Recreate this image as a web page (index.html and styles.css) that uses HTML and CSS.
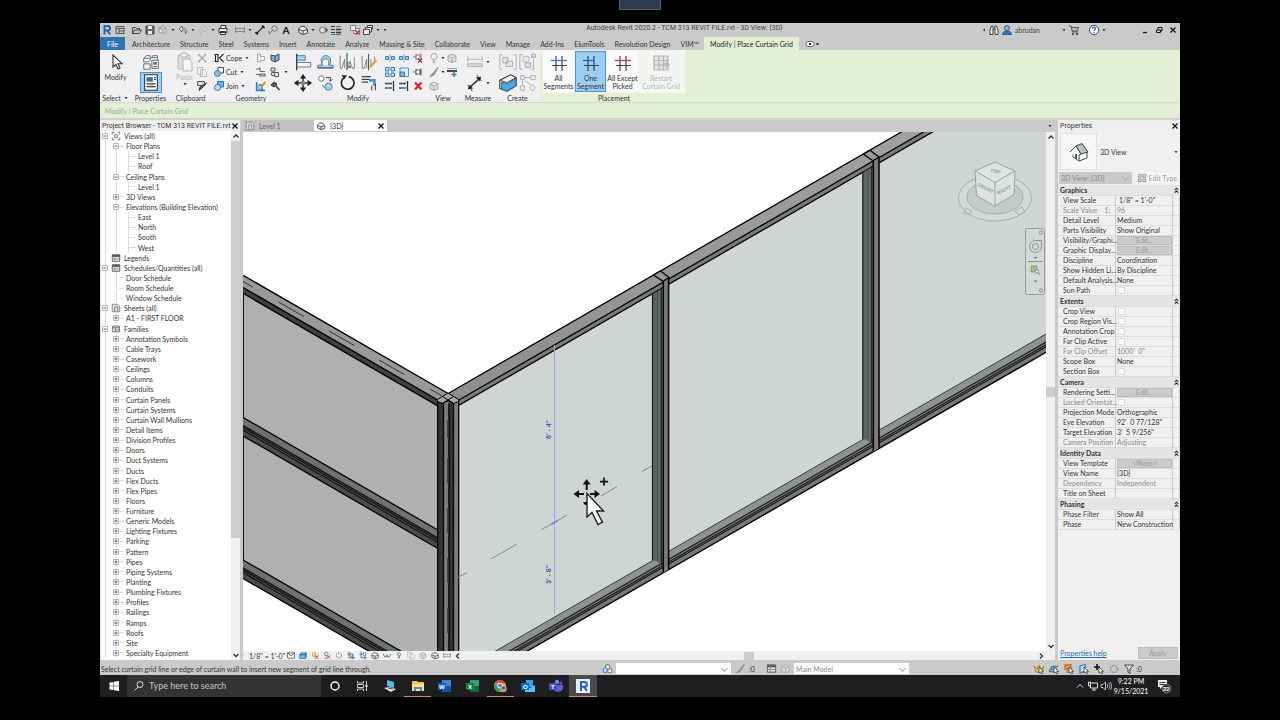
FILE: index.html
```html
<!DOCTYPE html>
<html lang="en">
<head>
<meta charset="utf-8">
<title>Autodesk Revit 2020.2</title>
<link rel="stylesheet" href="styles.css">
</head>
<body>
<svg class="defs" aria-hidden="true">
  <symbol id="plus" viewBox="0 0 6 6"><path d="M.5.5h5v5h-5z" fill="#fff" stroke="#b5b5b5"/><path d="M1.5 3h3M3 1.5v3" stroke="#555" stroke-width=".9"/></symbol>
  <symbol id="minus" viewBox="0 0 6 6"><path d="M.5.5h5v5h-5z" fill="#fff" stroke="#b5b5b5"/><path d="M1.5 3h3" stroke="#555" stroke-width=".9"/></symbol>
  <symbol id="caret" viewBox="0 0 6 6"><path d="M1.5 2h3L3 4.200z" fill="#333"/></symbol>
  <symbol id="x" viewBox="0 0 8 8"><path d="M1.500 1.500l5 5M6.500 1.500l-5 5" stroke="#111" stroke-width="1.300"/></symbol>
  <symbol id="revit" viewBox="0 0 12 12"><path d="M3.500 10.500V2h3.200a2.200 2.200 0 010 4.600H4M6.500 6.600l2.600 3.900" fill="none" stroke="#2866a8" stroke-width="2"/></symbol>
  <symbol id="win" viewBox="0 0 12 12"><path d="M2 2.500h8v7H2zM2 4.500h8M5 4.500v5M5 7h5" fill="none" stroke="#555"/></symbol>
  <symbol id="open" viewBox="0 0 12 12"><path d="M1.500 9.500v-6h3l1 1h3v1.500M1.500 9.500l2-3.500h7l-2 3.500z" fill="none" stroke="#444"/></symbol>
  <symbol id="save" viewBox="0 0 12 12"><path d="M2 2h7.500l.5.500V10H2z" fill="#666" stroke="#444"/><path d="M4 2h4v3H4zM4 7h4v3H4z" fill="#eee"/></symbol>
  <symbol id="cloud" viewBox="0 0 12 12"><path d="M2 4l4-2 3 2v4L6 9.500 2 8zM2 4l4 1.500L9 4M6 5.500v4" fill="#ddd" stroke="#999"/><circle cx="8.500" cy="8.500" r="1.800" fill="#bbb"/></symbol>
  <symbol id="undo" viewBox="0 0 12 12"><path d="M5 2L2 5l3 3V6c2-.5 3.500 0 3.500 3.500C11 7 9.500 4 5 4z" fill="#eee" stroke="#555" stroke-width=".9"/></symbol>
  <symbol id="redo" viewBox="0 0 12 12"><path d="M7 2l3 3-3 3V6C5 5.500 3.500 6 3.500 9.500 1 7 2.500 4 7 4z" fill="#ddd" stroke="#aaa" stroke-width=".9"/></symbol>
  <symbol id="print" viewBox="0 0 12 12"><path d="M3.500 4.500l.5-3h5l-.5 3M2 4.500h8v4H2zM3.500 7.500h5v3h-5z" fill="#f5f5f5" stroke="#333"/></symbol>
  <symbol id="meas" viewBox="0 0 12 12"><path d="M1.500 4.500h9M1.500 7.500h9M1.500 3v6M10.500 3v6" stroke="#888"/></symbol>
  <symbol id="dim" viewBox="0 0 12 12"><path d="M2 10l8-8" stroke="#333" stroke-width="1.200"/><path d="M1 8l3 3M8 1l3 3" stroke="#333"/><circle cx="3" cy="9" r="1.300"/><circle cx="9" cy="3" r="1.300"/></symbol>
  <symbol id="tag" viewBox="0 0 12 12"><circle cx="7.500" cy="4.500" r="2.700" fill="none" stroke="#777"/><path d="M5.500 6.500L2 10V7" fill="none" stroke="#777"/></symbol>
  <symbol id="home" viewBox="0 0 12 12"><path d="M1.500 5l3-3 4 1 2 3v3L6 10.500 2 8.500z" fill="#eee" stroke="#444"/><path d="M2 5.500l4 1.500 4.500-1.500M6 7v3.500" stroke="#444" fill="none"/></symbol>
  <symbol id="sec" viewBox="0 0 12 12"><circle cx="5.500" cy="6" r="3" fill="#ddd" stroke="#777"/><path d="M8.500 3L11 6 8.500 9z" fill="#555"/></symbol>
  <symbol id="lines" viewBox="0 0 12 12"><path d="M1 2.500h4M1 5.500h4M1 8.500h4" stroke="#333"/><path d="M6 2.500h5" stroke="#2f7fb8"/><path d="M6 5.500h5M6 8.500h5" stroke="#333" stroke-width="1.700"/><path d="M1 10.500h10" stroke="#2f7fb8"/></symbol>
  <symbol id="closeh" viewBox="0 0 12 12"><path d="M1.500 1.500h5v5h-5zM6.500 4.500h4v5h-6v-3" fill="#eee" stroke="#888"/><path d="M6.500 6.500l4 4m0-4l-4 4" stroke="#c8323a" stroke-width="1.500"/></symbol>
  <symbol id="switch" viewBox="0 0 12 12"><path d="M1.500 5.500h6v5h-6zM3.500 5V3.500h6V8H8M5.500 3V1.500h5V5.500" fill="#eee" stroke="#444"/></symbol>
  <symbol id="bino" viewBox="0 0 12 12"><path d="M2 10.500V6l1.500-4H5v8.500zM7 10.500V2h1.500L10 6v4.500zM5 5h2" fill="#eee" stroke="#444"/></symbol>
  <symbol id="user" viewBox="0 0 12 12"><circle cx="6" cy="4" r="2.500" fill="#8db4e0" stroke="#2e5d94"/><path d="M1.500 10.500c0-2.500 2-3.500 4.500-3.500s4.500 1 4.500 3.500z" fill="#3d76b8" stroke="#2e5d94"/></symbol>
  <symbol id="cart" viewBox="0 0 12 12"><path d="M1 2h2l1.500 6h5.500M3 3.500h7.500L9.500 7H4" fill="#bbb" stroke="#555"/><circle cx="5" cy="10" r="1"/><circle cx="9" cy="10" r="1"/></symbol>
  <symbol id="help" viewBox="0 0 12 12"><circle cx="6" cy="6" r="4.600" fill="#fff" stroke="#2d4d80"/><path d="M4.500 4.700c0-2 3-2 3 0 0 1.300-1.500 1-1.500 2.300" fill="none" stroke="#2d5fb0" stroke-width="1.200"/><path d="M5.400 8h1.200v1.200H5.400z" fill="#2d5fb0"/></symbol>
  <symbol id="arrow" viewBox="0 0 22 22"><path d="M8 4v12l3-2.500 2 4.500 2-1-2-4.300h4z" fill="#fff" stroke="#333" stroke-width="1.100"/></symbol>
  <symbol id="props1" viewBox="0 0 22 22"><path d="M3 7l3-3h4v5l-2 2H3zM11 7l2-3h5v5l-2 1M3 13h7v6H3zM3 7h6M12 6h5" fill="#f4f4f4" stroke="#666"/><path d="M12 9h7v9h-7z" fill="#fff" stroke="#555"/><path d="M13.500 11h4v3h-4z" fill="#3b7db5"/><path d="M13.500 16h4" stroke="#555"/></symbol>
  <symbol id="props2" viewBox="0 0 22 22"><path d="M4 2h14v17H4z" fill="#fff" stroke="#333" stroke-width="1.200"/><path d="M6 4.500h7v5H6z" fill="#3473aa"/><path d="M14.500 5h2M14.500 7h2M6 12h5M12.500 12H16M6 15h5M12.500 15H16" stroke="#333" stroke-width="1.200"/><path d="M12 10.500v6" stroke="#333"/></symbol>
  <symbol id="paste" viewBox="0 0 22 22"><path d="M4 4h12v14H4z" fill="#ddd" stroke="#b5b5b5"/><path d="M7 2h6v4H7z" fill="#eee" stroke="#b5b5b5"/><path d="M9 8h6l3 3v9H9z" fill="#f5f5f5" stroke="#b5b5b5"/></symbol>
  <symbol id="cutg" viewBox="0 0 12 12"><path d="M2 2l7 7M10 2L3 9" stroke="#aaa" stroke-width="1.300"/><path d="M2 9.500h2M8.500 9.500h2" stroke="#aaa" stroke-width="1.500"/></symbol>
  <symbol id="copyg" viewBox="0 0 12 12"><path d="M1.500 1.500h5v7h-5zM4.500 3.500h4l2 2v5h-6z" fill="#f4f4f4" stroke="#bbb"/></symbol>
  <symbol id="match" viewBox="0 0 12 12"><path d="M1.500 1.500h7v4h-7z" fill="#ddd" stroke="#555"/><path d="M10.500 3L6 8l-3 2.500L4 7z" fill="#667" stroke="#333"/></symbol>
  <symbol id="cope" viewBox="0 0 12 12"><path d="M2.500 2v8M5 2v8M1.500 2.500h4M1.500 9.500h4M10.500 2L6.500 6l4 4" stroke="#222" stroke-width="1.100" fill="none"/></symbol>
  <symbol id="cut" viewBox="0 0 12 12"><path d="M5 1.500h5.500V7H5z" fill="#fff" stroke="#444"/><circle cx="4.500" cy="7.500" r="3" fill="#8cc0e6" stroke="#2f78b0"/></symbol>
  <symbol id="join" viewBox="0 0 12 12"><path d="M4.500 1.500h6V7h-6z" fill="#6eb0e0" stroke="#2f78b0"/><circle cx="4.500" cy="7.500" r="3" fill="#bfe0f5" stroke="#2f78b0"/></symbol>
  <symbol id="g1" viewBox="0 0 12 12"><path d="M2.500 2h3v2.500h4v4h-4V10h-3z" fill="#eee" stroke="#aaa"/></symbol>
  <symbol id="g2" viewBox="0 0 12 12"><path d="M2 3l4 1v6L2 8zM6 4l4-2v6l-4 2" fill="#7db4dc" stroke="#444"/></symbol>
  <symbol id="g3" viewBox="0 0 12 12"><path d="M1 3h4M1 8.500h4M5 1.500V5M5 5.500h5M5 8h5v2H5z" fill="#ddd" stroke="#666" stroke-width="1.200"/></symbol>
  <symbol id="g4" viewBox="0 0 12 12"><path d="M2 2h4v3H2zM5.500 6.500h4v4h-4z" fill="#eee" stroke="#555"/><circle cx="4" cy="8" r="1.800" fill="#ddd" stroke="#555"/></symbol>
  <symbol id="wsets" viewBox="0 0 12 12"><path d="M4 5V3l2-1.500L8.500 3v3" fill="#e9f5df" stroke="#4f9d4f" stroke-width="1.200"/><path d="M1.500 6l2-1 2 1v4l-2 .5-2-.5z" fill="#bfe0f5" stroke="#2f78b0"/><path d="M6.500 6.500h4v4h-4z" fill="#f5f5f5" stroke="#777"/></symbol>
  <symbol id="g5" viewBox="0 0 12 12"><path d="M1.500 2v8.500H10M4 5h3v5" fill="#90c5e8" stroke="#2f78b0" stroke-width="1.300"/><path d="M10.500 2L6 7" stroke="#d79422" stroke-width="2"/></symbol>
  <symbol id="g6" viewBox="0 0 12 12"><path d="M2 5l3-3 3 2-3 3z" fill="#555" stroke="#333"/><path d="M6 5l4.500 5" stroke="#5b4636" stroke-width="1.800"/></symbol>
  <symbol id="align" viewBox="0 0 22 22"><path d="M4 2v18" stroke="#222" stroke-width="1.300"/><path d="M4.500 4h9v5h-9z" fill="#a7d2ef" stroke="#3a7cae"/><path d="M4.500 11.500h15v5h-15z" fill="#f5f5f5" stroke="#666"/></symbol>
  <symbol id="offset" viewBox="0 0 22 22"><path d="M3 14.500h5C5.500 9 7 4 12 4s6.500 5 4 10.500h4v3H3z" fill="#a7d2ef" stroke="#3a7cae"/><path d="M8 14.500c-1-4 1-7 4-7s4 3 2.500 7" fill="#f5f5f5" stroke="#666"/><path d="M3 17.500h17" stroke="#555" stroke-width="1.200"/></symbol>
  <symbol id="mirror" viewBox="0 0 22 22"><path d="M3.500 4v14h2l3-10v10M19 6v12h-2l-3-8v8" fill="#f5f5f5" stroke="#777"/><path d="M11 1v19" stroke="#3f9a48" stroke-width="1.600"/><path d="M12 11v6l2-1.500 1 2" fill="#fff" stroke="#444"/></symbol>
  <symbol id="mirror2" viewBox="0 0 22 22"><path d="M3.500 4v14h2l3-10v10M17 5v8M13 8v8" fill="#f5f5f5" stroke="#777"/><path d="M10.500 2v18" stroke="#555" stroke-width="1.200"/><path d="M19 9l-7 8" stroke="#e0a32a" stroke-width="2.500"/></symbol>
  <symbol id="move" viewBox="0 0 22 22"><path d="M11 4v14M4 11h14" stroke="#333" stroke-width="1.700"/><path d="M11 1l3.500 5h-7zM11 21l3.500-5h-7zM1 11l5-3.500v7zM21 11l-5-3.500v7z" fill="#222"/><path d="M9 9h4v4H9z" fill="#888"/></symbol>
  <symbol id="copy2" viewBox="0 0 22 22"><circle cx="7" cy="6" r="3" fill="#fff" stroke="#666"/><path d="M12 5h5v4M15 7l2 2 2-2" fill="none" stroke="#444"/><circle cx="15" cy="15" r="4" fill="#a7d2ef" stroke="#3a7cae"/><path d="M8 13l3 4" stroke="#666"/></symbol>
  <symbol id="rotate" viewBox="0 0 22 22"><path d="M8 5a7 7 0 105-1" fill="none" stroke="#222" stroke-width="1.800"/><path d="M5 2.500h6l-3 4.500z" fill="#222"/></symbol>
  <symbol id="trim" viewBox="0 0 22 22"><path d="M3 4h10M3 10h7M3 7h9" stroke="#444" stroke-width="1.200"/><path d="M11 8h6v6" fill="none" stroke="#4b96cc" stroke-width="3"/><path d="M14 14v5M18 12v7" stroke="#444" stroke-width="1.200"/></symbol>
  <symbol id="m1" viewBox="0 0 12 12"><path d="M1.500 4.500h3v3h-3zM7.500 4.500h3v3h-3z" fill="#a7d2ef" stroke="#3a7cae"/><path d="M6 2v8" stroke="#999"/></symbol>
  <symbol id="arr" viewBox="0 0 12 12"><path d="M1.500 1.500h3.500v3.500H1.500zM7 1.500h3.500v3.500H7zM1.500 7h3.500v3.500H1.500zM7 7h3.500v3.500H7z" fill="#c9e3f5" stroke="#3a7cae"/></symbol>
  <symbol id="scale" viewBox="0 0 12 12"><path d="M2 2h8.500v8.500H2z" fill="#e5f1fa" stroke="#4b96cc"/><path d="M2 6h4.500v4.500H2z" fill="#7db4dc" stroke="#3a7cae"/></symbol>
  <symbol id="ext" viewBox="0 0 12 12"><path d="M1 3.500h7M1 8h7" stroke="#444" stroke-width="1.300"/><path d="M9.500 1v10" stroke="#333" stroke-width="1.300"/><path d="M3 8h4" stroke="#4b96cc" stroke-width="2"/></symbol>
  <symbol id="pin" viewBox="0 0 12 12"><path d="M1 6h3M4 3v6M4 4h4v4H4M9 2.500v7" fill="#fff" stroke="#666" stroke-width="1.200"/></symbol>
  <symbol id="unpin" viewBox="0 0 12 12"><path d="M1 5h3M4 2v6M4 3h4v4H4M9 1.500v6" fill="#fff" stroke="#777"/><path d="M6 6.500l4 4m0-4l-4 4" stroke="#c8323a" stroke-width="1.500"/></symbol>
  <symbol id="del" viewBox="0 0 12 12"><path d="M3 2.500l6.500 7m0-7L3 9.500" stroke="#cf2a33" stroke-width="2.300"/></symbol>
  <symbol id="bulb" viewBox="0 0 12 12"><circle cx="6" cy="4.500" r="3" fill="#f2f2f2" stroke="#aaa"/><path d="M4.500 9h3M5 10.500h2" stroke="#999"/></symbol>
  <symbol id="gbox" viewBox="0 0 12 12"><path d="M2 4l4-2 4 2v5l-4 1.500L2 9zM2 4l4 2 4-2M6 6v4.500" fill="#ddd" stroke="#aaa"/></symbol>
  <symbol id="gbrush" viewBox="0 0 12 12"><path d="M10 1.500L5 7 2 10.500 6 9z" fill="#aaa" stroke="#888"/></symbol>
  <symbol id="lw" viewBox="0 0 12 12"><path d="M1 2.500h10" stroke="#999"/><path d="M1 5h10" stroke="#444" stroke-width="2"/><path d="M8 5v6M5.500 8.500h5" stroke="#3a7cae" stroke-width="1.500"/></symbol>
  <symbol id="ruler" viewBox="0 0 22 22"><path d="M3 8h16M3 5v6M19 5v6" stroke="#aaa"/><path d="M3 13h16v3H3z" fill="#ddd" stroke="#aaa"/></symbol>
  <symbol id="bigdim" viewBox="0 0 22 22"><path d="M5 16L16 6" stroke="#222" stroke-width="1.500"/><path d="M3 13l5 7M13 2l5 7" stroke="#333"/><path d="M3 18l2-5 4 4zM18 4l-2 5-4-4z" fill="#222"/></symbol>
  <symbol id="cr1" viewBox="0 0 22 22"><path d="M5 3H2v16h3M17 3h3v16h-3" fill="none" stroke="#aaa"/><path d="M5 6h6v6H5zM9 10h7v6H9z" fill="#e3e3e3" stroke="#aaa"/></symbol>
  <symbol id="cr2" viewBox="0 0 22 22"><path d="M5 3H2v16h3M17 8v11h-3" fill="none" stroke="#aaa"/><circle cx="9" cy="8" r="3.500" fill="#eee" stroke="#aaa"/><path d="M8 12h6v5H8z" fill="#ddd" stroke="#aaa"/><circle cx="17" cy="4" r="2" fill="none" stroke="#aaa" stroke-width="1.500"/></symbol>
  <symbol id="cr3" viewBox="0 0 22 22"><path d="M2 8L14 2l6 3v9L10 20l-8-3z" fill="#f5f5f5" stroke="#333" stroke-width="1.200"/><path d="M4 10l6 2 10-6v8l-10 6-6-2z" fill="#55a3dc" stroke="#1f5f92"/><path d="M2 8l8 2.500L20 5" fill="none" stroke="#333"/></symbol>
  <symbol id="cr4" viewBox="0 0 22 22"><path d="M3 3h4v4H3zM14 3h5v4h-5zM3 14h4v5H3zM16 12l3 4-3 4-3-4zM8 5h5M5 8v5M9 9l5 4" fill="none" stroke="#aaa"/></symbol>
  <symbol id="seg1" viewBox="0 0 22 22"><path d="M4 13.500h15M8 4v15M14 4v15" stroke="#444" stroke-width="1.200"/><path d="M3 8.500h16" stroke="#3d7ebd" stroke-width="1.300"/></symbol>
  <symbol id="seg2" viewBox="0 0 22 22"><path d="M4 13.500h15M8 4v15M14 4v15" stroke="#345" stroke-width="1.200"/><path d="M3 8.500h5" stroke="#345"/><path d="M8 8.500h6" stroke="#2668b0" stroke-width="1.300"/></symbol>
  <symbol id="seg3" viewBox="0 0 22 22"><path d="M4 13.500h15M8 4v15M14 4v15" stroke="#444" stroke-width="1.200"/><path d="M3 8.500h16" stroke="#b8414c" stroke-width="1.300"/></symbol>
  <symbol id="restart" viewBox="0 0 22 22"><path d="M4 4h14v14H4zM4 8.500h14M4 13h14M9 4v14M13.500 4v14" fill="#e3e3e3" stroke="#b5b5b5" stroke-width="1.200"/><path d="M12 14a4 4 0 014-3v-2l4 4-4 3v-2" fill="#bbb"/></symbol>
  <symbol id="frame" viewBox="0 0 12 12"><path d="M4 1.500H1.500V4M8 1.500h2.500V4M4 10.500H1.500V8M8 10.500h2.500V8" fill="none" stroke="#555"/><circle cx="6" cy="6" r="2.200" fill="#eee" stroke="#555"/></symbol>
  <symbol id="table" viewBox="0 0 12 12"><path d="M1.500 2h9v8h-9z" fill="#e5e5e5" stroke="#555"/><path d="M1.500 3.500h9" stroke="#555" stroke-width="2.500"/><path d="M4.500 3v7M1.500 7.200h9" stroke="#888"/></symbol>
  <symbol id="sheet" viewBox="0 0 12 12"><path d="M1.500 1.500h6l3 3v6h-9zM4.500 10V4.500h3.500V10" fill="#e5e5e5" stroke="#777"/></symbol>
  <symbol id="sun" viewBox="0 0 12 12"><circle cx="5" cy="5" r="2.700" fill="#ffe39a" stroke="#e09a26" stroke-width="1.300"/><path d="M6 6l4.500 4.500m0-4.500L6 10.500" stroke="#cf2a33" stroke-width="1.300"/></symbol>
  <symbol id="shad" viewBox="0 0 12 12"><circle cx="5" cy="4" r="2.500" fill="#cde3f3" stroke="#4b86b5"/><path d="M2 9.500h5" stroke="#4b86b5"/><path d="M6 6l4 4m0-4l-4 4" stroke="#cf2a33" stroke-width="1.300"/></symbol>
  <symbol id="crop" viewBox="0 0 12 12"><path d="M3.500 1v8H11M1 4h7.500v7" fill="none" stroke="#3f78a6" stroke-width="1.300"/><path d="M5 5.500l4.500 4.500m0-4.500L5 10" stroke="#c33c44"/></symbol>
  <symbol id="cropb" viewBox="0 0 12 12"><path d="M3.500 1v8H11M1 4h7.500v7" fill="none" stroke="#3f78a6" stroke-width="1.300"/><circle cx="8" cy="4" r="2" fill="#d6eaf8" stroke="#3f78a6"/></symbol>
  <symbol id="vbox" viewBox="0 0 12 12"><path d="M1.500 5l2-2.500h7L9 5zM1.500 5H9v5H1.500zM9 5l1.500-2.500V8L9 10" fill="#7fc0e6" stroke="#2f6f9e"/></symbol>
  <symbol id="glass" viewBox="0 0 12 12"><path d="M1 4l2 4h2l1-3 1 3h2l2-4" fill="none" stroke="#555"/></symbol>
  <symbol id="bulb2" viewBox="0 0 12 12"><circle cx="6" cy="4.500" r="2.200" fill="#d6eaf8" stroke="#3d7ebd"/><path d="M6 7v3" stroke="#555" stroke-width="1.500"/></symbol>
  <symbol id="selarrow" viewBox="0 0 12 12"><path d="M6 4v6l1.500-1 1.200 2 1-.6-1-2H10.500z" fill="#fff" stroke="#333" stroke-width=".8"/></symbol>
  <symbol id="gear" viewBox="0 0 12 12"><circle cx="6" cy="6" r="3.500" fill="none" stroke="#999" stroke-width="1.500" stroke-dasharray="2 .8"/></symbol>
  <symbol id="filter" viewBox="0 0 12 12"><path d="M1.500 2h9L7 6v4.500L5 9V6z" fill="#ddd" stroke="#444"/></symbol>
  <symbol id="up" viewBox="0 0 8 8"><path d="M1.500 5.500L4 3l2.500 2.500" fill="none" stroke="#333" stroke-width="1.300"/></symbol>
  <symbol id="down" viewBox="0 0 8 8"><path d="M1.500 3L4 5.500 6.500 3" fill="none" stroke="#333" stroke-width="1.300"/></symbol>
  <symbol id="right" viewBox="0 0 8 8"><path d="M3 1.500L5.500 4 3 6.500" fill="none" stroke="#333" stroke-width="1.300"/></symbol>
  <symbol id="left" viewBox="0 0 8 8"><path d="M5 1.500L2.500 4 5 6.500" fill="none" stroke="#333" stroke-width="1.300"/></symbol>
  <symbol id="dbl" viewBox="0 0 8 8"><path d="M2 4l2-2 2 2M2 7l2-2 2 2" fill="none" stroke="#222" stroke-width="1.200"/></symbol>
</svg>

<div class="app">
  <header class="titlebar">
    <div class="quick">
      <button aria-label="Revit"><svg><use href="#revit"/></svg></button>
      <button aria-label="Home"><svg><use href="#win"/></svg></button>
      <span class="gap"></span>
      <button aria-label="Open"><svg><use href="#open"/></svg></button>
      <button aria-label="Save"><svg><use href="#save"/></svg></button>
      <button aria-label="Synchronize"><svg><use href="#cloud"/></svg></button>
      <svg class="car"><use href="#caret"/></svg>
      <button aria-label="Undo"><svg><use href="#undo"/></svg></button>
      <svg class="car"><use href="#caret"/></svg>
      <button aria-label="Redo"><svg><use href="#redo"/></svg></button>
      <svg class="car"><use href="#caret"/></svg>
      <button aria-label="Print"><svg><use href="#print"/></svg></button>
      <span class="gap"></span>
      <button aria-label="Measure"><svg><use href="#meas"/></svg></button>
      <svg class="car"><use href="#caret"/></svg>
      <button aria-label="Dimension"><svg><use href="#dim"/></svg></button>
      <button aria-label="Tag"><svg><use href="#tag"/></svg></button>
      <button class="bigA" aria-label="Text">A</button>
      <span class="gap"></span>
      <button aria-label="3D view"><svg><use href="#home"/></svg></button>
      <svg class="car"><use href="#caret"/></svg>
      <button aria-label="Section"><svg><use href="#sec"/></svg></button>
      <button aria-label="Thin lines"><svg><use href="#lines"/></svg></button>
      <span class="gap wide"></span>
      <button aria-label="Close hidden windows"><svg><use href="#closeh"/></svg></button>
      <button aria-label="Switch windows"><svg><use href="#switch"/></svg></button>
      <svg class="car"><use href="#caret"/></svg>
      <svg class="car"><use href="#caret"/></svg>
    </div>
    <h1>Autodesk Revit 2020.2 - TCM 313 REVIT FILE.rvt - 3D View: {3D}</h1>
    <div class="account">
      <svg class="car side"><use href="#caret"/></svg>
      <button aria-label="Search"><svg><use href="#bino"/></svg></button>
      <button class="who"><svg><use href="#user"/></svg>abrudan</button>
      <svg class="car"><use href="#caret"/></svg>
      <button aria-label="App store"><svg><use href="#cart"/></svg></button>
      <button class="helpb" aria-label="Help"><svg><use href="#help"/></svg></button>
      <svg class="car"><use href="#caret"/></svg>
    </div>
    <div class="wincontrols">
      <button aria-label="Minimize"><svg viewBox="0 0 8 8"><path d="M2 6.500h4" stroke="#111" stroke-width="1.300"/></svg></button>
      <button aria-label="Restore"><svg viewBox="0 0 8 8"><path d="M1.500 4h4v2.500h-4zM3 3.500V1.500h4V5H6" fill="none" stroke="#111"/></svg></button>
      <button aria-label="Close"><svg><use href="#x"/></svg></button>
    </div>
  </header>

  <nav class="tabs">
    <button class="file">File</button>
    <button>Architecture</button><button>Structure</button><button>Steel</button><button>Systems</button><button>Insert</button><button>Annotate</button><button>Analyze</button><button>Massing &amp; Site</button><button>Collaborate</button><button>View</button><button>Manage</button><button>Add-Ins</button><button>ElumTools</button><button>Revolution Design</button><button>VIM™</button>
    <button class="current">Modify | Place Curtain Grid</button>
    <button class="mini" aria-label="Ribbon display"><svg viewBox="0 0 16 8"><rect x="2" y="1.500" width="8" height="5" rx="2" fill="#fff" stroke="#666"/><path d="M5 3h2v2H5zM12.500 3h2v2h-2z" fill="#222"/></svg></button>
  </nav>

  <div class="ribbon">
    <section class="panel select"><div class="body"><button class="tall"><svg><use href="#arrow"/></svg>Modify</button></div><h2>Select <svg class="car"><use href="#caret"/></svg></h2></section>
    <section class="panel prop"><div class="body col"><button aria-label="Type properties"><svg><use href="#props1"/></svg></button><button class="on" aria-label="Properties"><svg><use href="#props2"/></svg></button></div><h2>Properties</h2></section>
    <section class="panel clip"><div class="body"><button class="tall dis"><svg><use href="#paste"/></svg>Paste<svg class="car"><use href="#caret"/></svg></button><div class="stack"><button aria-label="Cut to clipboard"><svg><use href="#cutg"/></svg></button><button aria-label="Copy to clipboard"><svg><use href="#copyg"/></svg></button><button aria-label="Match type"><svg><use href="#match"/></svg></button></div></div><h2>Clipboard</h2></section>
    <section class="panel geo"><div class="body">
      <div class="stack named"><button><svg><use href="#cope"/></svg>Cope<svg class="car"><use href="#caret"/></svg></button><button><svg><use href="#cut"/></svg>Cut<svg class="car"><use href="#caret"/></svg></button><button><svg><use href="#join"/></svg>Join<svg class="car"><use href="#caret"/></svg></button></div>
      <div class="stack"><button aria-label="Join roof"><svg><use href="#g1"/></svg></button><button aria-label="Beam joins"><svg><use href="#g3"/></svg></button><button aria-label="Wall joins"><svg><use href="#g5"/></svg></button></div>
      <div class="stack"><button aria-label="Split face"><svg><use href="#g2"/></svg></button><button aria-label="Paint"><svg><use href="#g4"/></svg></button><button aria-label="Demolish"><svg><use href="#g6"/></svg></button></div>
      <svg class="car"><use href="#caret"/></svg>
    </div><h2>Geometry</h2></section>
    <section class="panel modify"><div class="body">
      <div class="big4"><button aria-label="Align"><svg><use href="#align"/></svg></button><button aria-label="Offset"><svg><use href="#offset"/></svg></button><button aria-label="Mirror by axis"><svg><use href="#mirror"/></svg></button><button aria-label="Mirror by drawing"><svg><use href="#mirror2"/></svg></button><button aria-label="Move"><svg><use href="#move"/></svg></button><button aria-label="Copy"><svg><use href="#copy2"/></svg></button><button aria-label="Rotate"><svg><use href="#rotate"/></svg></button><button aria-label="Trim"><svg><use href="#trim"/></svg></button></div>
      <div class="small9"><button aria-label="Split"><svg><use href="#m1"/></svg></button><button aria-label="Split with gap"><svg><use href="#m1"/></svg></button><button aria-label="Unpin"><svg><use href="#unpin"/></svg></button><button aria-label="Array"><svg><use href="#arr"/></svg></button><button aria-label="Scale"><svg><use href="#scale"/></svg></button><button aria-label="Pin"><svg><use href="#pin"/></svg></button><button aria-label="Extend one"><svg><use href="#ext"/></svg></button><button aria-label="Extend many"><svg><use href="#ext"/></svg></button><button aria-label="Delete"><svg><use href="#del"/></svg></button></div>
    </div><h2>Modify</h2></section>
    <section class="panel vw"><div class="body"><div class="stack"><button aria-label="Hide"><svg><use href="#bulb"/></svg></button><button aria-label="Override"><svg><use href="#gbrush"/></svg></button><button aria-label="Displace"><svg><use href="#gbox"/></svg></button></div><div class="stack thin"><svg class="car"><use href="#caret"/></svg><svg class="car"><use href="#caret"/></svg><span></span></div><div class="stack"><button aria-label="Selection box"><svg><use href="#gbox"/></svg></button><button aria-label="Linework"><svg><use href="#lw"/></svg></button><span></span></div></div><h2>View</h2></section>
    <section class="panel ms"><div class="body"><div class="pair"><button aria-label="Measure between"><svg><use href="#ruler"/></svg></button><svg class="car"><use href="#caret"/></svg><button aria-label="Aligned dimension"><svg><use href="#bigdim"/></svg></button><svg class="car"><use href="#caret"/></svg></div></div><h2>Measure</h2></section>
    <section class="panel cr"><div class="body"><div class="pair"><button aria-label="Assembly"><svg><use href="#cr1"/></svg></button><button aria-label="Parts"><svg><use href="#cr2"/></svg></button><button aria-label="Group"><svg><use href="#cr3"/></svg></button><button aria-label="Similar"><svg><use href="#cr4"/></svg></button></div></div><h2>Create</h2></section>
    <section class="panel place"><div class="body"><button class="tall"><svg><use href="#seg1"/></svg>All<br>Segments</button><button class="tall on"><svg><use href="#seg2"/></svg>One<br>Segment</button><button class="tall"><svg><use href="#seg3"/></svg>All Except<br>Picked</button><button class="tall dis restart"><svg><use href="#restart"/></svg>Restart<br>Curtain Grid</button></div><h2>Placement</h2></section>
  </div>
  <div class="options">Modify | Place Curtain Grid</div>

  <main class="work">
    <aside class="browser">
      <header class="phead"><h2>Project Browser - TCM 313 REVIT FILE.rvt</h2><button aria-label="Close browser"><svg><use href="#x"/></svg></button></header>
      <div class="treewrap">
        <ul class="tree">
          <li class="l0"><svg class="ex"><use href="#minus"/></svg><svg class="ic"><use href="#frame"/></svg>Views (all)</li>
          <li class="l1"><svg class="ex"><use href="#minus"/></svg>Floor Plans</li>
          <li class="l2">Level 1</li><li class="l2">Roof</li>
          <li class="l1"><svg class="ex"><use href="#minus"/></svg>Ceiling Plans</li>
          <li class="l2">Level 1</li>
          <li class="l1"><svg class="ex"><use href="#plus"/></svg>3D Views</li>
          <li class="l1"><svg class="ex"><use href="#minus"/></svg>Elevations (Building Elevation)</li>
          <li class="l2 last">East</li><li class="l2 last">North</li><li class="l2 last">South</li><li class="l2 last">West</li>
          <li class="l0"><span class="ex"></span><svg class="ic"><use href="#table"/></svg>Legends</li>
          <li class="l0"><svg class="ex"><use href="#minus"/></svg><svg class="ic"><use href="#table"/></svg>Schedules/Quantities (all)</li>
          <li class="l1 leaf">Door Schedule</li><li class="l1 leaf">Room Schedule</li><li class="l1 leaf">Window Schedule</li>
          <li class="l0"><svg class="ex"><use href="#minus"/></svg><svg class="ic"><use href="#sheet"/></svg>Sheets (all)</li>
          <li class="l1"><svg class="ex"><use href="#plus"/></svg>A1 - FIRST FLOOR</li>
          <li class="l0"><svg class="ex"><use href="#minus"/></svg><svg class="ic"><use href="#win"/></svg>Families</li>
          <li class="l1"><svg class="ex"><use href="#plus"/></svg>Annotation Symbols</li>
          <li class="l1"><svg class="ex"><use href="#plus"/></svg>Cable Trays</li>
          <li class="l1"><svg class="ex"><use href="#plus"/></svg>Casework</li>
          <li class="l1"><svg class="ex"><use href="#plus"/></svg>Ceilings</li>
          <li class="l1"><svg class="ex"><use href="#plus"/></svg>Columns</li>
          <li class="l1"><svg class="ex"><use href="#plus"/></svg>Conduits</li>
          <li class="l1"><svg class="ex"><use href="#plus"/></svg>Curtain Panels</li>
          <li class="l1"><svg class="ex"><use href="#plus"/></svg>Curtain Systems</li>
          <li class="l1"><svg class="ex"><use href="#plus"/></svg>Curtain Wall Mullions</li>
          <li class="l1"><svg class="ex"><use href="#plus"/></svg>Detail Items</li>
          <li class="l1"><svg class="ex"><use href="#plus"/></svg>Division Profiles</li>
          <li class="l1"><svg class="ex"><use href="#plus"/></svg>Doors</li>
          <li class="l1"><svg class="ex"><use href="#plus"/></svg>Duct Systems</li>
          <li class="l1"><svg class="ex"><use href="#plus"/></svg>Ducts</li>
          <li class="l1"><svg class="ex"><use href="#plus"/></svg>Flex Ducts</li>
          <li class="l1"><svg class="ex"><use href="#plus"/></svg>Flex Pipes</li>
          <li class="l1"><svg class="ex"><use href="#plus"/></svg>Floors</li>
          <li class="l1"><svg class="ex"><use href="#plus"/></svg>Furniture</li>
          <li class="l1"><svg class="ex"><use href="#plus"/></svg>Generic Models</li>
          <li class="l1"><svg class="ex"><use href="#plus"/></svg>Lighting Fixtures</li>
          <li class="l1"><svg class="ex"><use href="#plus"/></svg>Parking</li>
          <li class="l1"><svg class="ex"><use href="#plus"/></svg>Pattern</li>
          <li class="l1"><svg class="ex"><use href="#plus"/></svg>Pipes</li>
          <li class="l1"><svg class="ex"><use href="#plus"/></svg>Piping Systems</li>
          <li class="l1"><svg class="ex"><use href="#plus"/></svg>Planting</li>
          <li class="l1"><svg class="ex"><use href="#plus"/></svg>Plumbing Fixtures</li>
          <li class="l1"><svg class="ex"><use href="#plus"/></svg>Profiles</li>
          <li class="l1"><svg class="ex"><use href="#plus"/></svg>Railings</li>
          <li class="l1"><svg class="ex"><use href="#plus"/></svg>Ramps</li>
          <li class="l1"><svg class="ex"><use href="#plus"/></svg>Roofs</li>
          <li class="l1"><svg class="ex"><use href="#plus"/></svg>Site</li>
          <li class="l1"><svg class="ex"><use href="#plus"/></svg>Specialty Equipment</li>
        </ul>
        <div class="vscroll"><svg><use href="#up"/></svg><div class="track tree-track"><div class="thumb"></div></div><svg><use href="#down"/></svg></div>
      </div>
    </aside>

    <section class="viewer">
      <div class="viewtabs">
        <button class="vt"><svg class="ic"><use href="#sheet"/></svg>Level 1</button>
        <button class="vt active"><svg class="ic"><use href="#home"/></svg><span>{3D}</span><svg class="cl"><use href="#x"/></svg></button>
        <svg class="car more"><use href="#caret"/></svg>
      </div>
      <div class="stage">
        <svg class="model" viewBox="243 132 803 519" preserveAspectRatio="xMidYMid slice" role="img" aria-label="3D curtain wall">
          <defs>
            <linearGradient id="tb" x1="0" y1="0" x2="1" y2="0"><stop offset="0" stop-color="#8e8e8e"/><stop offset="1" stop-color="#a5a5a5"/></linearGradient>
            <g id="rail"><path d="M0 0L200 115.500v18.500L0 18.500z" fill="#4a4b4a"/><path d="M0 0L200 115.500v7L0 7z" fill="#6e7370"/><path d="M0 0l200 115.500M0 18.500l200 115.500" stroke="#000" stroke-width="1.300"/><path d="M0 8l200 115.500M0 10l200 115.500M0 12.500l200 115.500" stroke="#111" stroke-width="1.100"/></g>
          </defs>
          <path d="M243 132h803v519H243z" fill="#fff"/>
          <path d="M243 290l206 118v243H369L243 578z" fill="#b0b0b0"/>
          <path d="M449 398L1046 53.500V334L495 651h-46z" fill="#cfd5d2"/>
          <path d="M449 393L903 131h143V60L449 60z" fill="#fff"/>
          <path d="M880 146l30-17h136v70H880z" fill="#cfd5d2"/>
          <path d="M243 275.300L449 394v18L243 293z" fill="#414141"/>
          <path d="M243 275.300L449 394v12.300L243 287.500z" fill="#999"/>
          <path d="M243 275.300L449 394M243 287.500l206 119M243 293.300l206 119" stroke="#000" stroke-width="1.400"/>
          <path d="M243 281.500l10 5.700M278.600 302l25.400 14.600M329 331l25.400 14.600M379 360l25.400 14.600M430 389l12 7" stroke="#333"/>
          <path d="M243.500 293v285" stroke="#111"/>
          <use href="#rail" x="243" y="417.500"/>
          <use href="#rail" x="243" y="560"/>
          <path d="M449 393L1046 48.500v18L449 411.500z" fill="#7b7b7b"/>
          <path d="M449 393L1046 48.500v13L449 406z" fill="url(#tb)"/>
          <path d="M449 393L1046 48.500M449 405.800L1046 61.300M449 411L1046 66.500" stroke="#000" stroke-width="1.300"/>
          <path d="M484 657.700L1046 334v18.300L484 676z" fill="#777877"/>
          <path d="M484 657.700L1046 334v8L484 665.700z" fill="#8c9390"/>
          <path d="M484 657.700L1046 334" stroke="#3b403d"/>
          <path d="M484 665.700L1046 342M484 668.500L1046 344.800M484 670.500L1046 346.800" stroke="#151515" stroke-width="1.100"/>
          <path d="M484 676L1046 352.300" stroke="#000" stroke-width="1.400"/>
          <path d="M652.500 294l10-5.500V562l-3 1-7-4z" fill="#59645e"/>
          <path d="M657.500 291v270" stroke="#47504b"/>
          <path d="M652.500 293v267M661.500 288v277" stroke="#1a1d1b" stroke-width="1.200"/>
          <path d="M663 281l5.600-3.500v292L663 573z" fill="#7b7878"/>
          <path d="M663.300 281v291.500M668.600 277.500v292" stroke="#000" stroke-width="1.500"/>
          <path d="M653.500 275l7-4 8.500 6.500-6 3.700z" fill="#999" stroke="#000" stroke-width="1.300"/>
          <path d="M862.800 172.500l9.500-5.500v274l-2 1.200-7.500-4z" fill="#5d6863"/>
          <path d="M868 170v269" stroke="#4c5651"/>
          <path d="M862.800 172v267M871.800 166v277" stroke="#1a1d1b" stroke-width="1.200"/>
          <path d="M873 161l6-3.500v290.500l-6 4z" fill="#7f7a7a"/>
          <path d="M873.300 160v291M879 157.500v290" stroke="#000" stroke-width="1.500"/>
          <path d="M863.500 154.300l6.500-4 9 6.700-6 3.700z" fill="#999" stroke="#000" stroke-width="1.300"/>
          <path d="M437.500 400h21.200v251h-21.200z" fill="#343434"/>
          <path d="M443.500 402h5v249h-5zM454 402h4v249h-4z" fill="#7b7b7b"/>
          <path d="M437.700 400v251M443.500 402v249M453.500 402v249M458.700 400v251M449 404v247" stroke="#000" stroke-width="1.200"/>
          <path d="M448 420v18M448 458v25M448 508v25M448 558v25M448 608v25" stroke="#333" stroke-width="1.500"/>
          <path d="M437.500 399.500l10.500-6.500 10.700 6.500v2l-5.200 2-5.200-3.500-5 3.500-5.800-2z" fill="#aaa" stroke="#000"/>
          <path d="M442.500 396.500l10.500 6.500M453.500 396.500l-10.500 6.500" stroke="#000"/>
          <path d="M457 578l10-5.500M491 559l26-15M541.700 529.500l25.500-14.500M601 496l16-9.500M642 471.500l10-5.800" stroke="#888"/>
          <path d="M554.500 345v269" stroke="#94ace6"/><path d="M551 524.500l7-4" stroke="#6d8ee0" stroke-width="1.500"/><path d="M550 630l6-4" stroke="#554d78" stroke-width="2"/>
          <text class="dimtext" transform="translate(551 439) rotate(-90)">6' - 4"</text>
          <text class="dimtext" transform="translate(551 584) rotate(-90)">3' - 8"</text>
          <g fill="#111"><path d="M586.700 479l4 5.500h-8zM573.500 494l5.500-4v8zM600 494l-5.500-4v8z"/><path d="M585.700 483h2v7h-2zM578 493h6v2h-6zM590 493h6v2h-6zM583 502h4v3h-2zM600 480.700h8v1.700h-8zM603.200 477.500h1.700v8h-1.700z"/></g>
          <path d="M587 493.500V517l5-4.500 6 12 4.500-2.300-6-11.200h7z" fill="#fff" stroke="#222" stroke-width="1.400"/>
          <g fill="none" stroke="#a9aeac"><ellipse cx="995" cy="198" rx="36.500" ry="23" fill="#d3d9d6"/><ellipse cx="995" cy="197" rx="28" ry="17" fill="#c4cac7"/><path d="M966 208l6 3-3 4-5-2zM1015 211l7-4 3 5-6 3zM971 181l4-2M1016 179l4 3"/></g>
          <path d="M995 162l20 9-1 23.500-19.500 11.500-18-10.500L975 171z" fill="#dde1e0" stroke="#9da2a0"/><path d="M975 171l20 11.500 20-11.500M995 182.500V206" fill="none" stroke="#9da2a0"/>
          <text class="cube" transform="translate(990 172) rotate(10)">TOP</text><text class="cube" transform="translate(977 186) rotate(25)">FRONT</text><text class="cube" transform="translate(998 195) rotate(-28)">RIGHT</text>
          <rect x="1025.500" y="228.500" width="19" height="66" rx="2" fill="#d3d9d7" stroke="#979d9b"/>
          <g fill="none" stroke="#8b918f"><circle cx="1041" cy="232.500" r="1.700"/><circle cx="1041" cy="290.500" r="1.700"/><path d="M1041.500 240.500v6a6 6 0 11-6-6z"/><circle cx="1035.500" cy="246.500" r="3"/><path d="M1028 261.500h15"/></g>
          <path d="M1031 266h6v6h-6z" fill="#9fc08e" stroke="#82a571"/><path d="M1037 271l3 4" stroke="#888"/><circle cx="1037" cy="271.500" r="1.700" fill="#e9edeb" stroke="#888"/><path d="M1033.500 257h4l-2 2zM1033.500 280.500h4l-2 2z" fill="#777"/>
        </svg>
        <div class="vscroll"><svg><use href="#up"/></svg><div class="track mid"><div class="thumb"></div></div><svg><use href="#down"/></svg></div>
      </div>
      <div class="viewbar">
        <span class="scale">1/8" = 1'-0"</span>
        <div class="vicons"><svg viewBox="0 0 12 12"><path d="M1.500 2.500h9v7h-9zM1.500 2.500l4.500 4 4.500-4" fill="#fff" stroke="#444"/></svg><svg><use href="#vbox"/></svg><svg><use href="#sun"/></svg><svg><use href="#shad"/></svg><svg><use href="#gear"/></svg><svg><use href="#crop"/></svg><svg><use href="#cropb"/></svg><svg><use href="#home"/></svg><svg><use href="#glass"/></svg><svg><use href="#bulb2"/></svg><svg><use href="#copyg"/></svg><svg><use href="#gbox"/></svg><svg><use href="#home"/></svg><svg><use href="#meas"/></svg><svg class="a"><use href="#left"/></svg></div>
        <div class="htrack"><div class="thumb"></div></div>
        <svg class="a"><use href="#right"/></svg><span class="grip"></span>
      </div>
    </section>

    <aside class="props">
      <header class="phead"><h2>Properties</h2><button aria-label="Close properties"><svg><use href="#x"/></svg></button></header>
      <button class="type"><span class="thumbnail"><svg viewBox="0 0 22 22"><path d="M3 11l5-6 6-2 5 7v7l-8 3-6-4v-4z" fill="#f7f7f7" stroke="#444"/><path d="M2 11l6-6 5 8-2 1v6" fill="#fff" stroke="#444"/><path d="M8 5l6-2.500L20 11l-7 2z" fill="#b5c2c8" stroke="#444"/><path d="M7 13h2v5l-2-1z" fill="#555"/></svg></span>3D View<svg class="car"><use href="#caret"/></svg></button>
      <div class="pick"><label class="drop"><select aria-label="View"><option>3D View: {3D}</option></select></label><button class="edit"><svg class="ic"><use href="#arr"/></svg>Edit Type</button></div>
      <table class="grid">
        <colgroup><col class="c1"><col><col class="c3"></colgroup>
        <tbody>
        <tr class="cat"><th colspan="2">Graphics</th><td><svg><use href="#dbl"/></svg></td></tr>
        <tr><th>View Scale</th><td class="ind">1/8" = 1'-0"</td><td></td></tr>
        <tr class="off"><th>Scale Value &nbsp; &nbsp;1:</th><td>96</td><td></td></tr>
        <tr><th>Detail Level</th><td>Medium</td><td></td></tr>
        <tr><th>Parts Visibility</th><td>Show Original</td><td></td></tr>
        <tr><th>Visibility/Graphi...</th><td><button>Edit...</button></td><td></td></tr>
        <tr><th>Graphic Display...</th><td><button>Edit...</button></td><td></td></tr>
        <tr><th>Discipline</th><td>Coordination</td><td></td></tr>
        <tr><th>Show Hidden Li...</th><td>By Discipline</td><td></td></tr>
        <tr><th>Default Analysis...</th><td>None</td><td></td></tr>
        <tr><th><label for="sp">Sun Path</label></th><td><input type="checkbox" id="sp"></td><td></td></tr>
        <tr class="cat"><th colspan="2">Extents</th><td><svg><use href="#dbl"/></svg></td></tr>
        <tr><th><label for="cv">Crop View</label></th><td><input type="checkbox" id="cv"></td><td></td></tr>
        <tr><th><label for="crv">Crop Region Vis...</label></th><td><input type="checkbox" id="crv"></td><td></td></tr>
        <tr><th><label for="ac">Annotation Crop</label></th><td><input type="checkbox" id="ac"></td><td></td></tr>
        <tr><th><label for="fca">Far Clip Active</label></th><td><input type="checkbox" id="fca"></td><td></td></tr>
        <tr class="off"><th>Far Clip Offset</th><td>1000'&nbsp; 0"</td><td></td></tr>
        <tr><th>Scope Box</th><td>None</td><td></td></tr>
        <tr><th><label for="sb">Section Box</label></th><td><input type="checkbox" id="sb"></td><td></td></tr>
        <tr class="cat"><th colspan="2">Camera</th><td><svg><use href="#dbl"/></svg></td></tr>
        <tr><th>Rendering Setti...</th><td><button>Edit...</button></td><td></td></tr>
        <tr class="off"><th><label for="lo">Locked Orientat...</label></th><td><input type="checkbox" id="lo"></td><td></td></tr>
        <tr><th>Projection Mode</th><td>Orthographic</td><td></td></tr>
        <tr><th>Eye Elevation</th><td>92'&nbsp; 0 77/128"</td><td></td></tr>
        <tr><th>Target Elevation</th><td>3'&nbsp; 5 9/256"</td><td></td></tr>
        <tr class="off"><th>Camera Position</th><td>Adjusting</td><td></td></tr>
        <tr class="cat"><th colspan="2">Identity Data</th><td><svg><use href="#dbl"/></svg></td></tr>
        <tr><th>View Template</th><td><button>&lt;None&gt;</button></td><td></td></tr>
        <tr><th>View Name</th><td>{3D}</td><td></td></tr>
        <tr class="off"><th>Dependency</th><td>Independent</td><td></td></tr>
        <tr><th>Title on Sheet</th><td></td><td></td></tr>
        <tr class="cat"><th colspan="2">Phasing</th><td><svg><use href="#dbl"/></svg></td></tr>
        <tr><th>Phase Filter</th><td>Show All</td><td></td></tr>
        <tr><th>Phase</th><td>New Construction</td><td></td></tr>
        </tbody>
      </table>
      <footer><a href="#help">Properties help</a><button disabled>Apply</button></footer>
    </aside>
  </main>

  <footer class="status">
    <p>Select curtain grid line or edge of curtain wall to insert new segment of grid line through.</p>
    <svg class="i"><use href="#wsets"/></svg>
    <label class="drop workset"><select aria-label="Workset"><option></option></select></label>
    <svg class="i"><use href="#gbrush"/></svg><span class="zero">:0</span>
    <svg class="i"><use href="#table"/></svg><svg class="i"><use href="#gbox"/></svg>
    <label class="drop"><select aria-label="Design option"><option>Main Model</option></select></label>
    <div class="sel">
      <svg viewBox="0 0 12 12"><path d="M1 3l3 3 2-4 2 4 3-3-2 6H3z" fill="#e8c552" stroke="#a58a2a"/><use href="#selarrow"/></svg>
      <svg viewBox="0 0 12 12"><path d="M1 8.500l3-5h6M1 8.500h6M3 6h6" fill="none" stroke="#3a7cae" stroke-width="1.300"/><use href="#selarrow"/></svg>
      <svg viewBox="0 0 12 12"><path d="M2 2h6v4H2zM4 6v4" fill="#f2a25c" stroke="#c56a1e" stroke-width="1.300"/><use href="#selarrow"/></svg>
      <svg viewBox="0 0 12 12"><path d="M2 3l5-1.500V8L2 10z" fill="#cfe6f7" stroke="#3a7cae" stroke-width="1.300"/><use href="#selarrow"/></svg>
      <svg viewBox="0 0 12 12"><path d="M4 1v6M1 4h6" stroke="#111" stroke-width="1.600"/><use href="#selarrow"/></svg>
      <svg><use href="#gear"/></svg>
      <svg><use href="#filter"/></svg>
    </div><span class="zero fz">:0</span>
  </footer>

  <div class="taskbar">
    <button class="start" aria-label="Start"><svg viewBox="0 0 12 12"><path d="M1.500 2.500l4-.6v3.800h-4zM6 1.800l5-.8v4.700H6zM1.500 6.300h4v3.800l-4-.6zM6 6.300h5V11l-5-.8z" fill="#fff"/></svg></button>
    <label class="search"><svg viewBox="0 0 12 12"><circle cx="7" cy="4.500" r="3" fill="none" stroke="#ddd"/><path d="M5 7l-3.500 3.500" stroke="#ddd"/></svg><input type="text" placeholder="Type here to search" aria-label="Search"></label>
    <div class="apps">
      <button aria-label="Cortana"><svg viewBox="0 0 14 14"><circle cx="7" cy="7" r="4" fill="none" stroke="#fff" stroke-width="1.400"/></svg></button>
      <button aria-label="Task view"><svg viewBox="0 0 14 14"><path d="M2.500 2v2h6V2M2.500 12v-2h6v2M2.500 5.500h6v3h-6zM11.500 2v10" fill="none" stroke="#ccc"/><path d="M10.500 6h2v2h-2z" fill="#fff"/></svg></button>
      <button aria-label="Remote desktop"><svg viewBox="0 0 14 14"><path d="M4 1l7 2v6L4 7z" fill="#55b9ea"/><path d="M1 9l5-1 7 2-5 3z" fill="#d9e6ee"/><path d="M5 9l5 1" stroke="#357"/></svg></button>
      <button class="run" aria-label="File Explorer"><svg viewBox="0 0 14 14"><path d="M1 2h5l1 1h6v9H1z" fill="#f0c24b"/><path d="M1 5h12v7H1z" fill="#ffe08a"/><path d="M3 12V8h8v4H9v-2H5v2z" fill="#3d8fd1"/></svg></button>
      <button aria-label="Word"><svg viewBox="0 0 14 14"><path d="M4 1h9v12H4z" fill="#3a86d8"/><path d="M4 7h9v6H4z" fill="#1c4f9c"/><path d="M0 4h8v7H0z" fill="#185abd"/><text x="1" y="10" class="glyph">W</text></svg></button>
      <button aria-label="Excel"><svg viewBox="0 0 14 14"><path d="M4 1h9v12H4z" fill="#2fa36b"/><path d="M4 7h9v6H4z" fill="#17653d"/><path d="M0 4h8v7H0z" fill="#107c41"/><text x="2" y="10" class="glyph">X</text></svg></button>
      <button class="run" aria-label="Chrome"><svg viewBox="0 0 14 14"><circle cx="7" cy="7" r="6" fill="#e8b93a"/><path d="M1.800 4A6 6 0 0112.500 4.500L7 5z" fill="#d9483b"/><path d="M1.800 4A6 6 0 007 13l2-5z" fill="#3c9c52"/><circle cx="7" cy="6.500" r="2.500" fill="#4c87e0" stroke="#fff"/><circle cx="10.500" cy="10" r="3.300" fill="#b59a88"/><circle cx="10.500" cy="9" r="1.300" fill="#6d4b3c"/></svg></button>
      <button aria-label="Outlook"><svg viewBox="0 0 14 14"><path d="M5 1h7v7H5z" fill="#2fa4e7"/><path d="M4 6l5 3 5-3v7H4z" fill="#56c3f2"/><path d="M0 4h8v7H0z" fill="#0f6cbd"/><text x="2" y="10" class="glyph">O</text></svg></button>
      <button aria-label="Teams"><svg viewBox="0 0 14 14"><circle cx="8" cy="3" r="2.200" fill="#7b83eb"/><circle cx="12" cy="4" r="1.500" fill="#5059c9"/><path d="M5 6h9v4l-2 2-4 1-3-2z" fill="#5c64d0"/><path d="M0 4h8v7H0z" fill="#464eb8"/><text x="2" y="10" class="glyph">T</text></svg></button>
      <button class="run here" aria-label="Revit"><svg viewBox="0 0 14 14"><path d="M0 0h14v14H0z" fill="#e7eef5"/><path d="M5 12V3h3.500a2.300 2.300 0 010 4.800H5M8 8l3 4" fill="none" stroke="#2665a8" stroke-width="2"/></svg></button>
    </div>
    <div class="tray">
      <svg viewBox="0 0 12 12"><path d="M3 7.500L6 4.500l3 3" fill="none" stroke="#ddd"/></svg>
      <svg viewBox="0 0 12 12"><path d="M3.500 3h7v5h-7zM5 10h4M7 8v2M1.500 2v4h2V2z" fill="none" stroke="#ddd"/></svg>
      <svg viewBox="0 0 12 12"><path d="M1 4.500h2L5.500 2v8L3 7.500H1zM7 4c1 1 1 3 0 4M8.500 3c2 2 2 4 0 6M10 2c2.500 3 2.500 5 0 8" fill="none" stroke="#ddd" stroke-width=".8"/></svg>
      <time>9:22 PM<br>9/15/2021</time>
      <button aria-label="Notifications"><svg viewBox="0 0 16 16"><path d="M2 2h9v7H6l-2 2V9H2z" fill="#eee"/><path d="M3.500 4.500h6M3.500 6.500h6" stroke="#333"/><circle cx="10.500" cy="10.500" r="4.500" fill="#333" stroke="#999" stroke-width=".7"/><text x="7" y="13" class="glyph">22</text></svg></button>
    </div>
  </div>
</div>
<div class="topknob"></div>
</body>
</html>
```
FILE: styles.css
```css
* { box-sizing: border-box; }
body {
  margin: 0;
  min-height: 100vh;
  padding: 23px 100px;
  background: #000;
  color: #333;
  font: 7px/10px Lato, "Open Sans", sans-serif;
  display: flex;
}
button, input, select { font: inherit; color: inherit; border: 0; background: none; padding: 0; margin: 0; }
button { display: flex; align-items: center; justify-content: center; }
svg { display: block; flex: none; width: 12px; height: 12px; fill: #222; }
h1, h2, p, ul { margin: 0; padding: 0; font: inherit; }
.defs { position: absolute; width: 0; height: 0; }
.car { width: 6px; height: 6px; }
.topknob {
  position: absolute;
  top: 0;
  left: 50%;
  width: 42px;
  height: 10px;
  margin-left: -21px;
  background: #2c3c4e;
  border: 1px solid #53616f;
  border-top: 0;
}
.app { flex: 1; min-width: 0; display: flex; flex-direction: column; background: #cbcacb; }

.titlebar { display: flex; align-items: center; height: 14px; }
.quick { display: flex; align-items: center; gap: 1px; padding-left: 1px; }
.quick .gap { width: 3px; }
.quick .wide { width: 5px; }
.bigA { width: 12px; font-size: 10px; font-weight: 900; color: #222; }
.titlebar h1 { flex: 1; align-self: flex-start; text-align: center; white-space: nowrap; color: #444; font-family: Roboto, sans-serif; }
.account { display: flex; align-items: center; gap: 1px; }
.account .side { transform: rotate(90deg); }
.who { gap: 2px; color: #444; padding-right: 20px; }
.helpb { margin-left: 7px; }
.wincontrols { display: flex; gap: 6px; padding: 0 3px 0 34px; }
.wincontrols svg { width: 8px; height: 8px; }

.tabs { display: flex; height: 13px; }
.tabs button { padding: 0 5px; white-space: nowrap; }
.tabs .file { width: 25px; margin-right: 2px; background: #2b74b4; color: #fff; }
.tabs .current { padding: 0 6px; background: #e4f0d6; color: #222; }
.tabs .mini svg { width: 16px; height: 8px; }

.ribbon { display: flex; height: 53px; background: #e4f0d6; border-bottom: 1px solid #d3dacb; }
.panel { display: flex; flex-direction: column; background: #f0f0f2; }
.panel .body { display: flex; height: 43px; align-items: stretch; justify-content: center; padding-top: 1px; }
.panel h2 { display: flex; justify-content: center; align-items: center; height: 9px; white-space: nowrap; gap: 2px; }
.tall { flex-direction: column; justify-content: flex-start; line-height: 8px; text-align: center; white-space: nowrap; }
.tall svg { width: 22px; height: 22px; }
.tall svg.car { width: 6px; height: 6px; }
.dis { color: #b5b5b5; }
.select { width: 31px; }
.prop { width: 39px; }
.prop .col { flex-direction: column; align-items: center; }
.prop button { width: 22px; height: 21px; }
.prop svg { width: 20px; height: 20px; }
.on { background: #9dcdf3; outline: 1px solid #4e93c9; outline-offset: -1px; }
.clip { width: 41px; }
.stack { display: flex; flex-direction: column; justify-content: space-around; }
.geo { width: 80px; }
.geo .body { align-items: center; gap: 2px; }
.geo .stack { height: 42px; }
.named button { justify-content: flex-start; gap: 1px; width: 40px; }
.named .car { margin-left: 1px; }
.modify { width: 134px; }
.modify .body { gap: 3px; }
.big4 { display: grid; grid-template-columns: repeat(4, 22px); align-content: space-around; }
.big4 svg, .pair svg { width: 20px; height: 20px; }
.small9 { display: grid; grid-template-columns: repeat(3, 14px); align-content: space-around; }
.vw { width: 36px; }
.stack span { height: 12px; }
.thin .car { margin: 3px 0; }
.ms { width: 34px; }
.pair { display: grid; grid-template-columns: auto auto; align-items: center; align-content: space-around; }
.pair .car { width: 6px; height: 6px; }
.cr { width: 45px; }
.place { background: none; margin-left: 3px; width: 142px; }
.place .body { justify-content: flex-start; gap: 1px; background: #f3f5f1; }
.place .tall { width: 31px; padding-top: 1px; background: #fafafa; height: 41px; }
.place .tall.on { background: #9dcdf3; }
.place .restart { width: 44px; background: none; }
.options { height: 17px; padding: 4px 5px 0; line-height: 9px; background: #e4f0d6; color: #a0a69a; border-bottom: 2px solid #cfd2cb; }

.work { flex: 1; display: grid; grid-template-columns: 140px minmax(0, 1fr) 122px; column-gap: 3px; min-height: 0; margin-bottom: 2px; }
.phead { display: flex; align-items: center; justify-content: space-between; height: 11px; padding: 0 1px 0 2px; background: #eeeeef; }
.phead h2 { white-space: nowrap; font-family: Roboto, sans-serif; }
.phead svg { width: 8px; height: 8px; }
.browser, .viewer, .props { display: flex; flex-direction: column; min-width: 0; min-height: 0; }
.browser { background: #fff; }
.treewrap { flex: 1; display: flex; min-height: 0; }
.tree { flex: 1; display: grid; grid-auto-rows: 1fr; list-style: none; padding-bottom: 2px; border-left: 1px solid #ddd; }
.tree li { display: flex; align-items: center; white-space: nowrap; }
.tree .l0 { padding-left: 1px; background: linear-gradient(#ddd, #ddd) 4px 0 / 1px 100% no-repeat; }
.tree .l1 { padding-left: 12px; background: linear-gradient(#ddd, #ddd) 4px 0 / 1px 100% no-repeat, linear-gradient(#ddd, #ddd) 15px 0 / 1px 100% no-repeat, linear-gradient(#ddd, #ddd) 18px 50% / 5px 1px no-repeat; }
.tree .l2 { padding-left: 37px; background: linear-gradient(#ddd, #ddd) 4px 0 / 1px 100% no-repeat, linear-gradient(#ddd, #ddd) 15px 0 / 1px 100% no-repeat, linear-gradient(#ddd, #ddd) 27px 0 / 1px 100% no-repeat, linear-gradient(#ddd, #ddd) 27px 50% / 8px 1px no-repeat; }
.tree .leaf { padding-left: 25px; }
.ex { width: 6px; height: 6px; margin-right: 7px; }
.l0 .ex { margin-right: 3px; }
.ic { width: 10px; height: 10px; }
.l0 .ic { margin-right: 3px; }
.vscroll { width: 9px; display: flex; flex-direction: column; align-items: center; background: #f0f0f0; }
.vscroll svg { width: 8px; height: 10px; }
.track { flex: 1; align-self: stretch; display: flex; flex-direction: column; }
.thumb { background: #cdcdcd; }
.tree-track .thumb { flex: 0 0 78%; }
.mid::before { content: ""; flex: 0 0 49%; }
.mid .thumb { height: 10px; }

.viewtabs { display: flex; height: 12px; padding-bottom: 1px; background: #cbcacb; }
.vt { width: 71px; justify-content: flex-start; gap: 4px; padding-left: 2px; color: #666; background: #c2c1c2; }
.vt.active { width: 73px; background: #fff; color: #333; }
.vt span { flex: 1; text-align: left; }
.vt .cl { width: 8px; height: 8px; margin-right: 2px; }
.more { margin: 3px 2px 0 auto; }
.stage { flex: 1; display: flex; min-height: 0; background: #fff; }
.model { flex: 1; width: 0; height: 100%; min-width: 0; }
.dimtext { font: 700 7px "Liberation Sans", sans-serif; fill: #4a5fae; }
.cube { font: 700 5px "Liberation Sans", sans-serif; fill: #989d9b; }
.viewbar { display: flex; align-items: center; height: 9px; background: #f0f0f0; }
.scale { width: 43px; padding-left: 6px; white-space: nowrap; }
.vicons { display: flex; align-items: center; gap: 2px; }
.vicons svg { width: 10px; height: 9px; }
.viewbar .a { width: 8px; height: 8px; }
.htrack { flex: 1; display: flex; }
.htrack::before { content: ""; flex: 0 0 49%; }
.htrack .thumb { width: 10px; height: 8px; }
.grip { width: 10px; }

.props { background: #f0f0f0; }
.type { justify-content: flex-start; height: 41px; padding: 0 1px 0 2px; gap: 3px; }
.type .car { margin-left: auto; }
.thumbnail { width: 37px; height: 37px; display: flex; align-items: center; justify-content: center; background: #f7f7f7; border: 1px solid #e2e2e2; }
.thumbnail svg { width: 22px; height: 22px; }
.pick { display: flex; gap: 4px; height: 12px; padding: 0 2px 0 1px; color: #888; }
.drop { position: relative; display: flex; flex: 1; background: #c9c9c9; }
.drop select { flex: 1; min-width: 0; appearance: none; padding-left: 2px; opacity: 1; }
.drop::after { content: ""; position: absolute; right: 4px; top: 3px; width: 4px; height: 4px; border: solid #aaa; border-width: 0 1px 1px 0; transform: rotate(45deg); }
.edit { width: 42px; gap: 2px; background: #f6f6f6; opacity: .8; white-space: nowrap; }
.edit svg { filter: grayscale(1); }
.grid { width: 100%; margin-top: 1px; table-layout: fixed; border-collapse: separate; border-spacing: 0; }
.grid .c1 { width: 58px; }
.grid .c3 { width: 7px; }
.grid tr { height: 10px; }
.grid th, .grid td { padding: 0 0 0 5px; height: 10px; line-height: 9px; text-align: left; font-weight: 400; white-space: nowrap; border-bottom: 1px solid #dcdcdc; border-right: 1px solid #c9c9c9; }
.grid td { padding-left: 1px; }
.grid .ind { padding-left: 3px; }
.grid .cat th, .grid .cat td { height: 11px; background: #e4e4e4; border-right-color: #e4e4e4; }
.grid .cat th { padding-left: 2px; font-weight: 700; }
.grid .cat td { padding: 0; }
.grid .cat svg { width: 7px; height: 8px; }
.grid .off { color: #888; }
.grid button { width: 100%; height: 9px; background: #cbcbcb; color: #999; outline: 1px solid #bcbcbc; outline-offset: -1px; }
.grid input { display: block; appearance: none; width: 7px; height: 7px; margin: 1px 0 1px 1px; background: #fff; border: 1px solid #ddd; }
.props footer { display: flex; justify-content: space-between; align-items: center; margin-top: auto; padding: 0 2px 1px; }
.props a { color: #1a6fb5; }
.props footer button { width: 40px; height: 12px; background: #cbcbcb; color: #999; border: 1px solid #bfbfbf; }

.status { display: flex; align-items: center; height: 13px; }
.status p { flex: 0 0 502px; padding-left: 1px; white-space: nowrap; }
.status .i { width: 11px; height: 11px; margin-right: 3px; }
.status .drop { flex: 0 0 115px; height: 11px; background: #fff; color: #888; }
.status .workset { margin-right: 4px; }
.zero { width: 17px; }
.sel { display: flex; gap: 3px; margin-left: auto; }
.sel svg { width: 12px; height: 12px; }
.fz { width: 45px; padding-left: 1px; }

.taskbar { display: flex; height: 22px; background: #1e1e20; color: #ddd; }
.start { width: 27px; }
.search { display: flex; align-items: center; gap: 4px; width: 194px; padding-left: 6px; background: #333335; }
.search input { flex: 1; min-width: 0; font-size: 9px; outline: 0; }
.search input::placeholder { color: #c4c4c4; opacity: 1; }
.apps { display: grid; grid-template-columns: repeat(10, 1fr); width: 276px; }
.apps svg { width: 14px; height: 14px; }
.run { box-shadow: inset 0 -1px #d08a6c; }
.here { background: #4a4a4c; }
.glyph { font: 700 6px "Liberation Sans", sans-serif; fill: #fff; }
.tray { display: flex; align-items: center; gap: 1px; margin-left: auto; padding-right: 8px; }
.tray time { width: 36px; text-align: center; white-space: nowrap; color: #fff; }
.tray button svg { width: 16px; height: 16px; }
.tray button { margin-left: 6px; }
```
